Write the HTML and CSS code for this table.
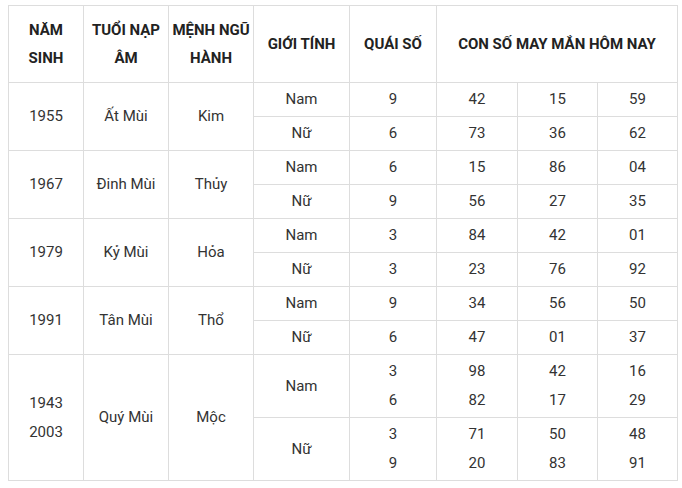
FILE: index.html
```html
<!DOCTYPE html>
<html lang="vi">
<head>
<meta charset="utf-8">
<link rel="stylesheet" href="styles.css">
</head>
<body>
<table class="lucky">
  <colgroup>
    <col class="c1"><col class="c2"><col class="c3"><col class="c4"><col class="c5"><col class="c6"><col class="c7"><col class="c8">
  </colgroup>
  <thead>
    <tr class="head">
      <th>NĂM<br>SINH</th>
      <th>TUỔI NẠP<br>ÂM</th>
      <th>MỆNH NGŨ<br>HÀNH</th>
      <th>GIỚI TÍNH</th>
      <th>QUÁI SỐ</th>
      <th colspan="3">CON SỐ MAY MẮN HÔM NAY</th>
    </tr>
  </thead>
  <tbody>
    <tr class="r"><td rowspan="2">1955</td><td rowspan="2">Ất Mùi</td><td rowspan="2">Kim</td><td>Nam</td><td>9</td><td>42</td><td>15</td><td>59</td></tr>
    <tr class="r"><td>Nữ</td><td>6</td><td>73</td><td>36</td><td>62</td></tr>
    <tr class="r"><td rowspan="2">1967</td><td rowspan="2">Đinh Mùi</td><td rowspan="2">Thủy</td><td>Nam</td><td>6</td><td>15</td><td>86</td><td>04</td></tr>
    <tr class="r"><td>Nữ</td><td>9</td><td>56</td><td>27</td><td>35</td></tr>
    <tr class="r"><td rowspan="2">1979</td><td rowspan="2">Kỷ Mùi</td><td rowspan="2">Hỏa</td><td>Nam</td><td>3</td><td>84</td><td>42</td><td>01</td></tr>
    <tr class="r"><td>Nữ</td><td>3</td><td>23</td><td>76</td><td>92</td></tr>
    <tr class="r"><td rowspan="2">1991</td><td rowspan="2">Tân Mùi</td><td rowspan="2">Thổ</td><td>Nam</td><td>9</td><td>34</td><td>56</td><td>50</td></tr>
    <tr class="r"><td>Nữ</td><td>6</td><td>47</td><td>01</td><td>37</td></tr>
    <tr class="rr"><td rowspan="2">1943<br>2003</td><td rowspan="2">Quý Mùi</td><td rowspan="2">Mộc</td><td>Nam</td><td>3<br>6</td><td>98<br>82</td><td>42<br>17</td><td>16<br>29</td></tr>
    <tr class="rr"><td>Nữ</td><td>3<br>9</td><td>71<br>20</td><td>50<br>83</td><td>48<br>91</td></tr>
  </tbody>
</table>
</body>
</html>
```

FILE: styles.css
```css
html, body {
  margin: 0;
  padding: 0;
  background: #ffffff;
}
body {
  padding: 5px 0 0 8px;
  font-family: Roboto, "Liberation Sans", Arial, sans-serif;
}
.lucky {
  border-collapse: collapse;
  table-layout: fixed;
  width: 669px;
}
.c1 { width: 75px; }
.c2 { width: 85px; }
.c3 { width: 85px; }
.c4 { width: 96px; }
.c5 { width: 87px; }
.c6 { width: 81px; }
.c7 { width: 80px; }
.c8 { width: 80px; }
.lucky th,
.lucky td {
  border: 1px solid #dddddd;
  text-align: center;
  vertical-align: middle;
  padding: 0 2px;
}
.lucky th {
  font-weight: 700;
  font-size: 15px;
  line-height: 28px;
  color: #222222;
  height: 76px;
}
.lucky td {
  font-size: 15px;
  line-height: 29px;
  color: #333333;
}
.r td { height: 33px; }
.rr td { height: 62px; }
```
